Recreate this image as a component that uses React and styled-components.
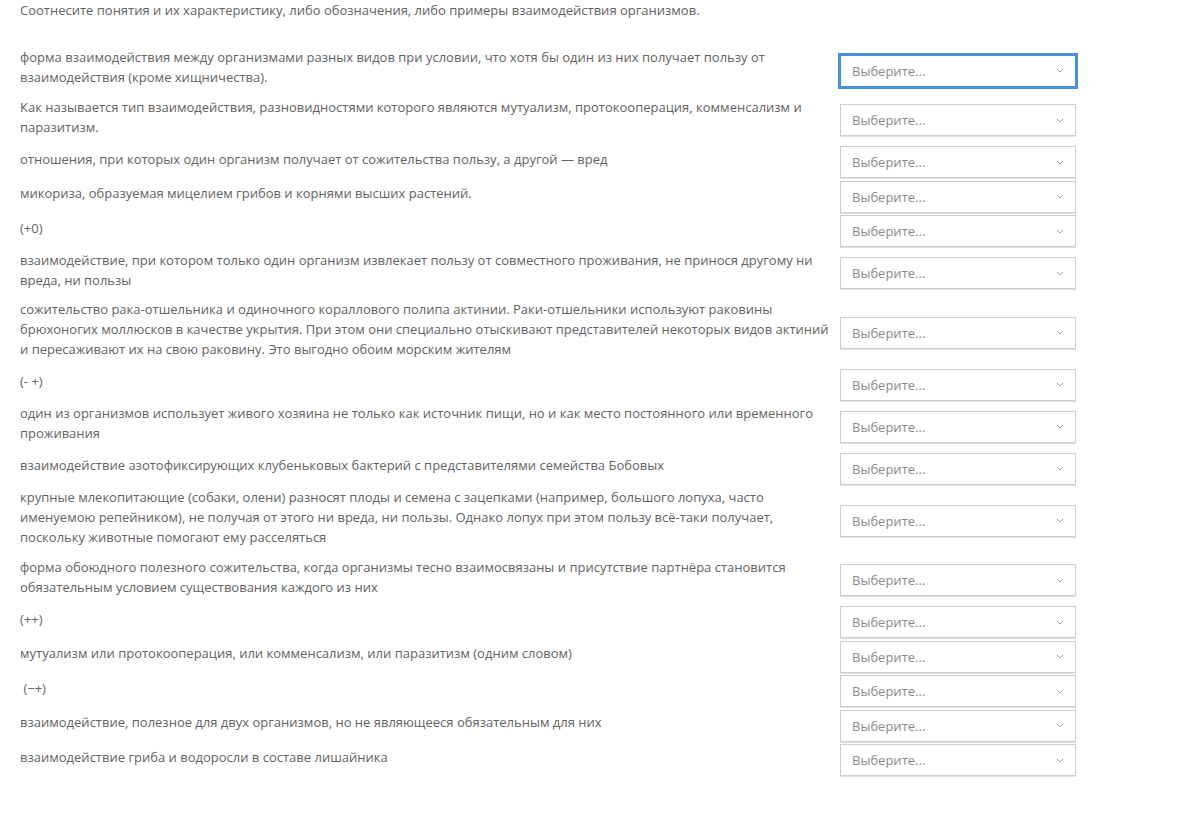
import React, { useState } from "react";
import styled, { createGlobalStyle } from "styled-components";

const items = [
   "форма взаимодействия между организмами разных видов при условии, что хотя бы один из них получает пользу от взаимодействия (кроме хищничества).",
   "Как называется тип взаимодействия, разновидностями которого являются мутуализм, протокооперация, комменсализм и паразитизм.",
   "отношения, при которых один организм получает от сожительства пользу, а другой — вред",
   "микориза, образуемая мицелием грибов и корнями высших растений.",
   "(+0)",
   "взаимодействие, при котором только один организм извлекает пользу от совместного проживания, не принося другому ни вреда, ни пользы",
   "сожительство рака-отшельника и одиночного кораллового полипа актинии. Раки-отшельники используют раковины брюхоногих моллюсков в качестве укрытия. При этом они специально отыскивают представителей некоторых видов актиний и пересаживают их на свою раковину. Это выгодно обоим морским жителям",
   "(- +)",
   "один из организмов использует живого хозяина не только как источник пищи, но и как место постоянного или временного проживания",
   "взаимодействие азотофиксирующих клубеньковых бактерий с представителями семейства Бобовых",
   "крупные млекопитающие (собаки, олени) разносят плоды и семена с зацепками (например, большого лопуха, часто именуемою репейником), не получая от этого ни вреда, ни пользы. Однако лопух при этом пользу всё-таки получает, поскольку животные помогают ему расселяться",
   "форма обоюдного полезного сожительства, когда организмы тесно взаимосвязаны и присутствие партнёра становится обязательным условием существования каждого из них",
   "(++)",
   "мутуализм или протокооперация, или комменсализм, или паразитизм (одним словом)",
   "\u00a0(−+)",
   "взаимодействие, полезное для двух организмов, но не являющееся обязательным для них",
   "взаимодействие гриба и водоросли в составе лишайника",
];

const App = () => {
   const [focused, setFocused] = useState(0);

   return (
      <>
         <GlobalStyle />
         <Page>
            <Intro>Соотнесите понятия и их характеристику, либо обозначения, либо примеры взаимодействия организмов.</Intro>
            <MatchList>
               {items.map((text, i) => (
                  <MatchRow key={i}>
                     <Question>{text}</Question>
                     <Select $active={focused === i} onClick={() => setFocused(i)}>
                        <Placeholder>Выберите...</Placeholder>
                        <svg width="8" height="5" viewBox="0 0 8 5">
                           <path d="M1 1l3 3 3-3" fill="none" stroke="#a5a5a5" strokeWidth="1" />
                        </svg>
                     </Select>
                  </MatchRow>
               ))}
            </MatchList>
         </Page>
      </>
   );
};

export default App;

const GlobalStyle = createGlobalStyle`
   body {
      margin: 0;
      background: #fff;
      font-family: "Open Sans", "Noto Sans", sans-serif;
   }
`;

const Page = styled.div`
   width: 1056px;
   padding: 0 20px 40px;
   color: #636363;
   font-size: 13px;
   line-height: 20px;
`;

const Intro = styled.p`
   margin: 0 0 27px;
`;

const MatchList = styled.div`
   display: flex;
   flex-direction: column;
   gap: 2.5px;
`;

const MatchRow = styled.div`
   display: grid;
   grid-template-columns: 1fr 236px;
   column-gap: 10px;
   align-items: center;
`;

const Question = styled.div`
   padding-bottom: 7px;
   white-space: pre-wrap;
`;

const Select = styled.div`
   box-sizing: border-box;
   height: 32px;
   display: flex;
   align-items: center;
   justify-content: space-between;
   padding: 0 11px 0 11px;
   background: #fff;
   border: 1px solid ${({ $active }) => ($active ? "#4a90d9" : "#cdcdcd")};
   box-shadow: ${({ $active }) => ($active ? "0 0 0 2px #4a90d9" : "0 1px 0 #e2e2e2")};
   cursor: pointer;
`;

const Placeholder = styled.span`
   color: #8a8a8a;
`;
